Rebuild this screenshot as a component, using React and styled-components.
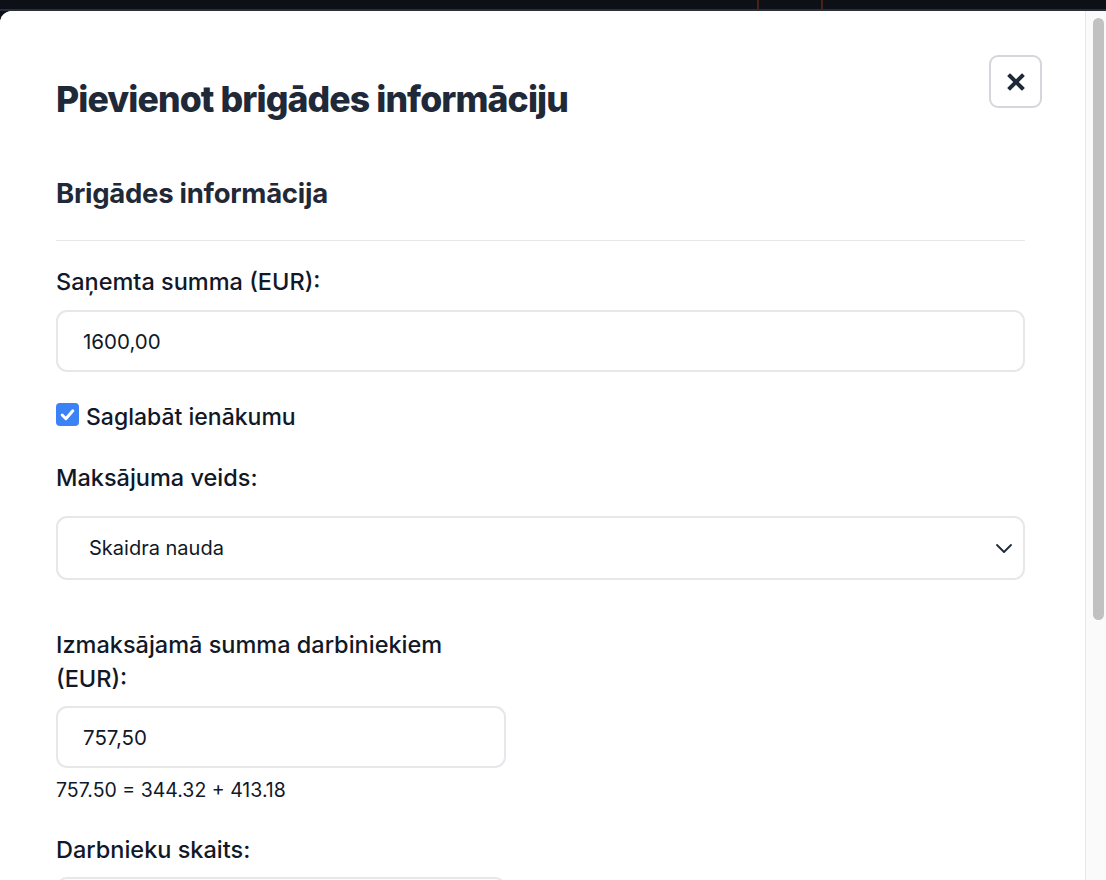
import React from 'react';
import styled, { createGlobalStyle } from 'styled-components';

const GlobalStyle = createGlobalStyle`
    * { box-sizing: border-box; }
    html, body {
        margin: 0;
        padding: 0;
        height: 100%;
        background: #0d1117;
        overflow: hidden;
    }
    body {
        font-family: Inter, "Noto Sans", "DejaVu Sans", sans-serif;
        color: #111827;
    }
`;

const Page = styled.div`
    display: flex;
    flex-direction: column;
    height: 880px;
`;

const TopStrip = styled.div`
    display: flex;
    gap: 62px;
    height: 11px;
    padding-left: 757px;
    background: #0d1117;
    border-bottom: 2px solid #2a3039;
`;

const Tick = styled.span`
    width: 2px;
    height: 9px;
    background: #4a2317;
`;

const Body = styled.div`
    flex: 1;
    display: flex;
    min-height: 0;
    background: #ffffff;
    border-top-left-radius: 12px;
    overflow: hidden;
`;

const Modal = styled.div`
    flex: 1;
    padding: 44px 43px 0 56px;
    background: #ffffff;
`;

const ScrollTrack = styled.div`
    width: 21px;
    padding: 7px 2px 0 7px;
    background: #fafafa;
    border-left: 1px solid #e8e8e8;
`;

const ScrollThumb = styled.div`
    height: 602px;
    border-radius: 6px;
    background: #c1c1c1;
`;

const Header = styled.div`
    display: flex;
    justify-content: space-between;
    align-items: flex-start;
`;

const Title = styled.h1`
    margin: 23px 0 0;
    font-size: 35.6px;
    line-height: 44px;
    font-weight: 800;
    letter-spacing: -0.025em;
    color: #1f2937;
`;

const CloseButton = styled.button`
    display: flex;
    align-items: center;
    justify-content: center;
    width: 53px;
    height: 53px;
    padding: 0;
    border: 2px solid #d4d6db;
    border-radius: 9px;
    background: #ffffff;
    color: #1f2937;
`;

const Content = styled.div`
    width: 969px;
`;

const Section = styled.h2`
    margin: 55px 0 0;
    padding-bottom: 31px;
    font-size: 27.5px;
    line-height: 32px;
    font-weight: 700;
    letter-spacing: -0.01em;
    color: #1f2937;
    border-bottom: 1px solid #e5e7eb;
`;

const Label = styled.div`
    margin-top: ${(p) => p.$top || 0}px;
    font-size: 23.5px;
    line-height: 34px;
    font-weight: 500;
    color: #111827;
`;

const Input = styled.div`
    display: flex;
    align-items: center;
    flex-shrink: 0;
    height: ${(p) => p.$h || 62}px;
    margin-top: ${(p) => p.$top || 10}px;
    padding: 0 ${(p) => p.$pad || 25}px;
    border: 2px solid #e6e7ea;
    border-radius: 11px;
    background: #ffffff;
    font-size: 20.5px;
    color: #111827;
`;

const SelectBox = styled(Input)`
    justify-content: space-between;
    padding-right: 8px;
    font-size: 20px;
`;

const CheckRow = styled.label`
    display: flex;
    align-items: center;
    gap: 7px;
    margin-top: 28px;
    font-size: 23px;
    line-height: 34px;
    font-weight: 500;
    color: #111827;
`;

const CheckBox = styled.span`
    display: flex;
    align-items: center;
    justify-content: center;
    width: 23px;
    height: 23px;
    margin-top: -6px;
    border-radius: 4px;
    background: #3b82f6;
`;

const Grid = styled.div`
    display: grid;
    grid-template-columns: 450px 1fr;
    column-gap: 24px;
    margin-top: 48px;
`;

const Field = styled.div`
    display: flex;
    flex-direction: column;
`;

const Hint = styled.div`
    margin-top: 9px;
    font-size: 19.5px;
    line-height: 27px;
    color: #111827;
`;

export default function App() {
    return (
        <>
            <GlobalStyle />
            <Page>
                <TopStrip>
                    <Tick />
                    <Tick />
                </TopStrip>
                <Body>
                    <Modal>
                        <Header>
                            <Title>Pievienot brigādes informāciju</Title>
                            <CloseButton aria-label="Aizvērt">
                                <svg width="20" height="20" viewBox="0 0 20 20">
                                    <path
                                        d="M4 4 L16 16 M16 4 L4 16"
                                        stroke="currentColor"
                                        strokeWidth="4"
                                        strokeLinecap="square"
                                    />
                                </svg>
                            </CloseButton>
                        </Header>
                        <Content>
                            <Section>Brigādes informācija</Section>

                            <Label $top={24}>Saņemta summa (EUR):</Label>
                            <Input $top={11}>1600,00</Input>

                            <CheckRow>
                                <CheckBox>
                                    <svg width="17" height="17" viewBox="0 0 16 16">
                                        <path
                                            d="M3 8.5 L6.5 12 L13 4.5"
                                            fill="none"
                                            stroke="#ffffff"
                                            strokeWidth="2.8"
                                            strokeLinecap="round"
                                            strokeLinejoin="round"
                                        />
                                    </svg>
                                </CheckBox>
                                Saglabāt ienākumu
                            </CheckRow>

                            <Label $top={27}>Maksājuma veids:</Label>
                            <SelectBox $top={21} $h={64} $pad={31}>
                                Skaidra nauda
                                <svg width="22" height="22" viewBox="0 0 22 22">
                                    <path
                                        d="M4 8 L11 15 L18 8"
                                        fill="none"
                                        stroke="#1f2937"
                                        strokeWidth="1.8"
                                        strokeLinecap="round"
                                        strokeLinejoin="round"
                                    />
                                </svg>
                            </SelectBox>

                            <Grid>
                                <Field>
                                    <Label>Izmaksājamā summa darbiniekiem (EUR):</Label>
                                    <Input>757,50</Input>
                                    <Hint>757.50 = 344.32 + 413.18</Hint>
                                    <Label $top={29}>Darbnieku skaits:</Label>
                                    <Input $top={10} />
                                </Field>
                            </Grid>
                        </Content>
                    </Modal>
                    <ScrollTrack>
                        <ScrollThumb />
                    </ScrollTrack>
                </Body>
            </Page>
        </>
    );
}
